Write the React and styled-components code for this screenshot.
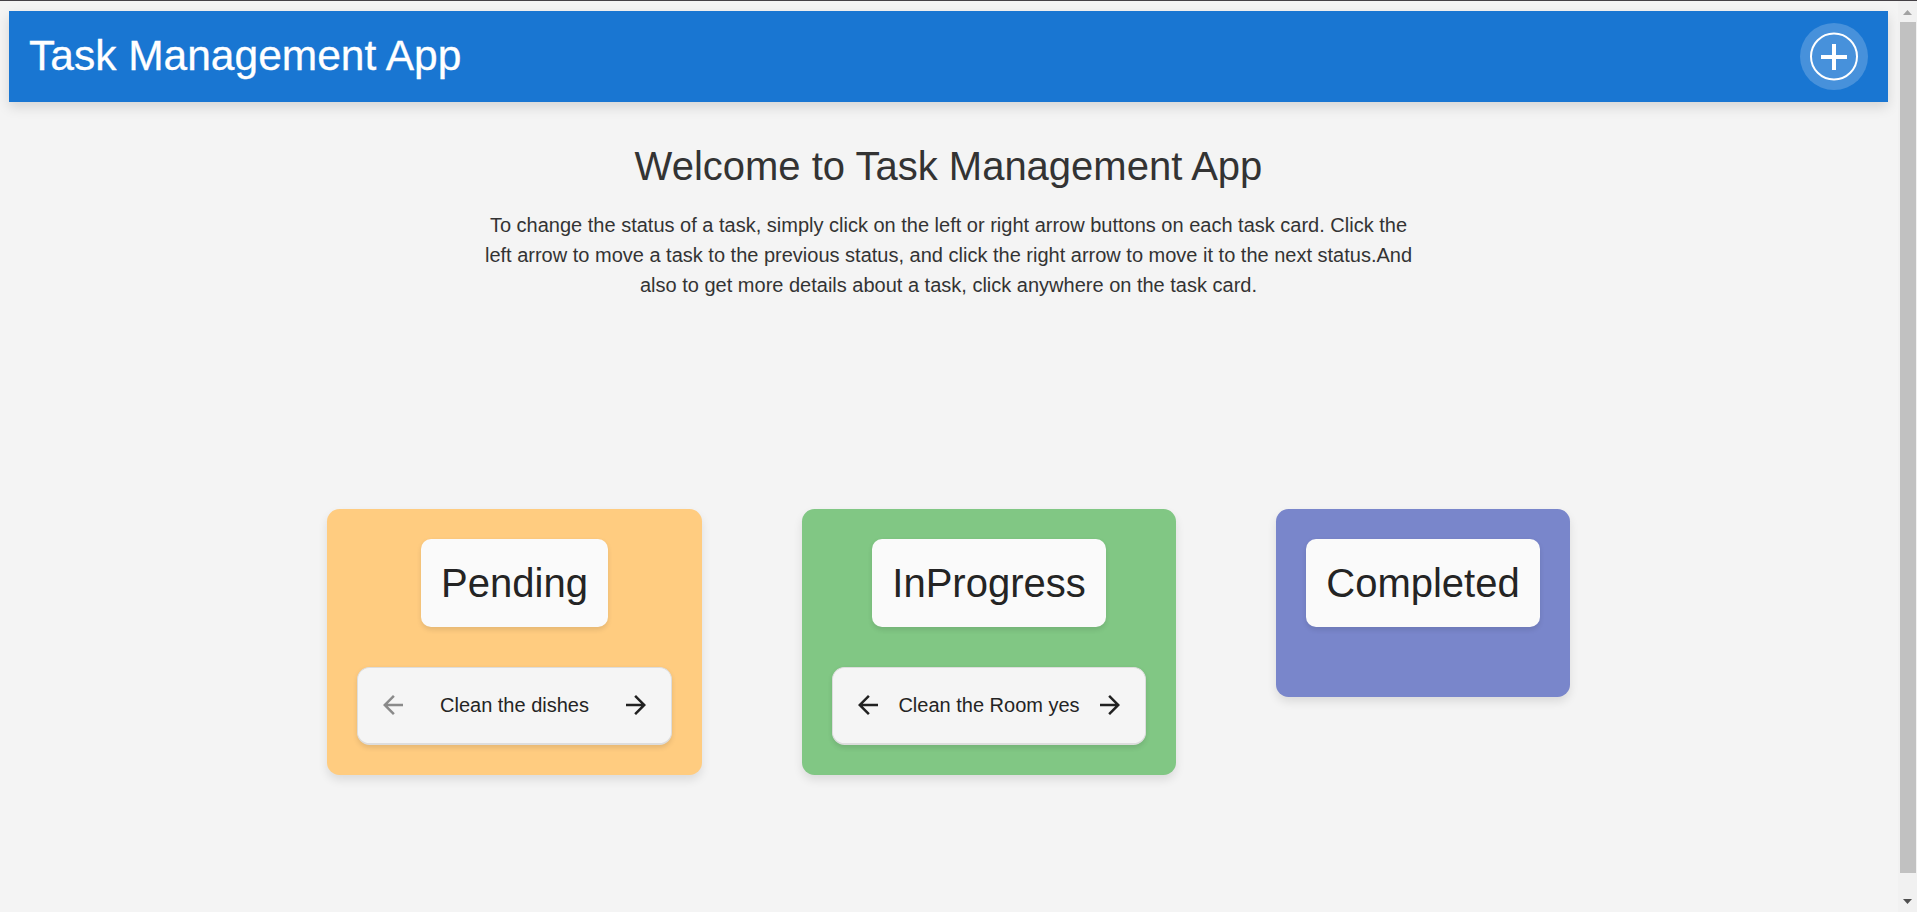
import React from "react";
import styled, { createGlobalStyle } from "styled-components";

const GlobalStyle = createGlobalStyle`
  * { box-sizing: border-box; }
  body {
    margin: 0;
    background: #f4f4f4;
    font-family: "Liberation Sans", Arial, sans-serif;
    color: #333;
    overflow: hidden;
  }
  h1, h2, h3, p { margin: 0; font-weight: 400; }
  button { font: inherit; color: inherit; border: 0; background: none; padding: 0; }
`;

const Shell = styled.div`
  display: flex;
  height: 912px;
  border-top: 1px solid #454146;
`;

const Page = styled.div`
  flex: 1;
  min-width: 0;
  padding: 10px 10px 0 9px;
`;

const AppBar = styled.header`
  display: flex;
  align-items: center;
  justify-content: space-between;
  height: 91px;
  padding: 0 20px;
  background: #1976d2;
  color: #fff;
  box-shadow: 0 5px 12px rgba(0, 0, 0, 0.13);
`;

const AppTitle = styled.h1`
  font-size: 42.5px;
  line-height: 50px;
  -webkit-text-stroke: 0.3px #fff;
  padding-bottom: 1px;
`;

const AddButton = styled.button`
  display: flex;
  align-items: center;
  justify-content: center;
  width: 68px;
  height: 67px;
  border-radius: 50%;
  background: rgba(255, 255, 255, 0.2);
`;

const Intro = styled.section`
  display: flex;
  flex-direction: column;
  align-items: center;
  height: 407px;
  padding-top: 40px;
  text-align: center;
`;

const IntroTitle = styled.h2`
  font-size: 40px;
  line-height: 48px;
`;

const IntroText = styled.p`
  width: 940px;
  margin-top: 20px;
  font-size: 20px;
  line-height: 30px;
`;

const Board = styled.main`
  display: flex;
  justify-content: center;
  align-items: flex-start;
  gap: 100px;
`;

const Column = styled.section`
  display: flex;
  flex-direction: column;
  align-items: center;
  padding: 30px;
  border-radius: 12.5px;
  background: ${({ $color }) => $color};
  box-shadow: 0 5px 10px rgba(0, 0, 0, 0.1);
`;

const ColumnTitle = styled.h3`
  min-width: ${({ $minWidth }) => $minWidth}px;
  margin-bottom: 40px;
  padding: 20px;
  border-radius: 10px;
  background: #fafafa;
  color: #242424;
  font-size: 40px;
  line-height: 48px;
  text-align: center;
  box-shadow: 0 2.5px 5px rgba(0, 0, 0, 0.1);
`;

const TaskCard = styled.article`
  display: flex;
  align-items: center;
  justify-content: space-between;
  width: ${({ $width }) => $width}px;
  height: 78px;
  padding: 0 10px;
  border: 1px solid #ddd;
  border-bottom-width: 2px;
  border-radius: 12.5px;
  background: #f5f5f5;
  color: #242424;
  font-size: 20px;
  box-shadow: 0 2.5px 5px rgba(0, 0, 0, 0.1);
`;

const ArrowButton = styled.button`
  display: flex;
  align-items: center;
  justify-content: center;
  width: 50px;
  height: 50px;
  margin-bottom: 1px;
  color: #212121;
  opacity: ${({ disabled }) => (disabled ? 0.5 : 1)};
`;

const ScrollBar = styled.aside`
  display: flex;
  flex-direction: column;
  align-items: center;
  width: 19px;
  background: #f1f1f1;
`;

const ScrollArrow = styled.div`
  display: flex;
  align-items: center;
  justify-content: center;
  height: ${({ $height }) => $height}px;
  padding-top: ${({ $offset }) => $offset}px;
`;

const ScrollThumb = styled.div`
  width: 16px;
  margin-left: 1px;
  height: 851px;
  background: #c1c1c1;
`;

const Arrow = ({ back }) => (
  <svg width="30" height="30" viewBox="0 0 24 24" fill="currentColor">
    <path
      d={
        back
          ? "M20 11H7.83l5.59-5.59L12 4l-8 8 8 8 1.41-1.41L7.83 13H20v-2z"
          : "m12 4-1.41 1.41L16.17 11H4v2h12.17l-5.58 5.59L12 20l8-8z"
      }
    />
  </svg>
);

const columns = [
  { title: "Pending", color: "#ffcc80", titleWidth: 187, width: 315, task: "Clean the dishes", first: true },
  { title: "InProgress", color: "#81c784", titleWidth: 234, width: 314, task: "Clean the Room yes" },
  { title: "Completed", color: "#7986cb", titleWidth: 234 },
];

export default function App() {
  return (
    <>
      <GlobalStyle />
      <Shell>
        <Page>
          <AppBar>
            <AppTitle>Task Management App</AppTitle>
            <AddButton aria-label="Add task">
              <svg width="50" height="49" viewBox="0 0 50 49" fill="none" stroke="#fff">
                <circle cx="25" cy="24.5" r="23" strokeWidth="2" />
                <path d="M12 25h26M25 12v26" strokeWidth="4" />
              </svg>
            </AddButton>
          </AppBar>
          <Intro>
            <IntroTitle>Welcome to Task Management App</IntroTitle>
            <IntroText>
              To change the status of a task, simply click on the left or right arrow buttons on
              each task card. Click the left arrow to move a task to the previous status, and click
              the right arrow to move it to the next status.And also to get more details about a
              task, click anywhere on the task card.
            </IntroText>
          </Intro>
          <Board>
            {columns.map(({ title, color, titleWidth, width, task, first }) => (
              <Column key={title} $color={color}>
                <ColumnTitle $minWidth={titleWidth}>{title}</ColumnTitle>
                {task && (
                  <TaskCard $width={width}>
                    <ArrowButton disabled={first} aria-label="Previous status">
                      <Arrow back />
                    </ArrowButton>
                    <span>{task}</span>
                    <ArrowButton aria-label="Next status">
                      <Arrow />
                    </ArrowButton>
                  </TaskCard>
                )}
              </Column>
            ))}
          </Board>
        </Page>
        <ScrollBar>
          <ScrollArrow $height={21} $offset={2}>
            <svg width="9" height="5" viewBox="0 0 9 5" fill="#a3a3a3">
              <path d="M0 5 4.5 0 9 5z" />
            </svg>
          </ScrollArrow>
          <ScrollThumb />
          <ScrollArrow $height={39} $offset={18}>
            <svg width="9" height="5" viewBox="0 0 9 5" fill="#505050">
              <path d="M0 0 4.5 5 9 0z" />
            </svg>
          </ScrollArrow>
        </ScrollBar>
      </Shell>
    </>
  );
}
